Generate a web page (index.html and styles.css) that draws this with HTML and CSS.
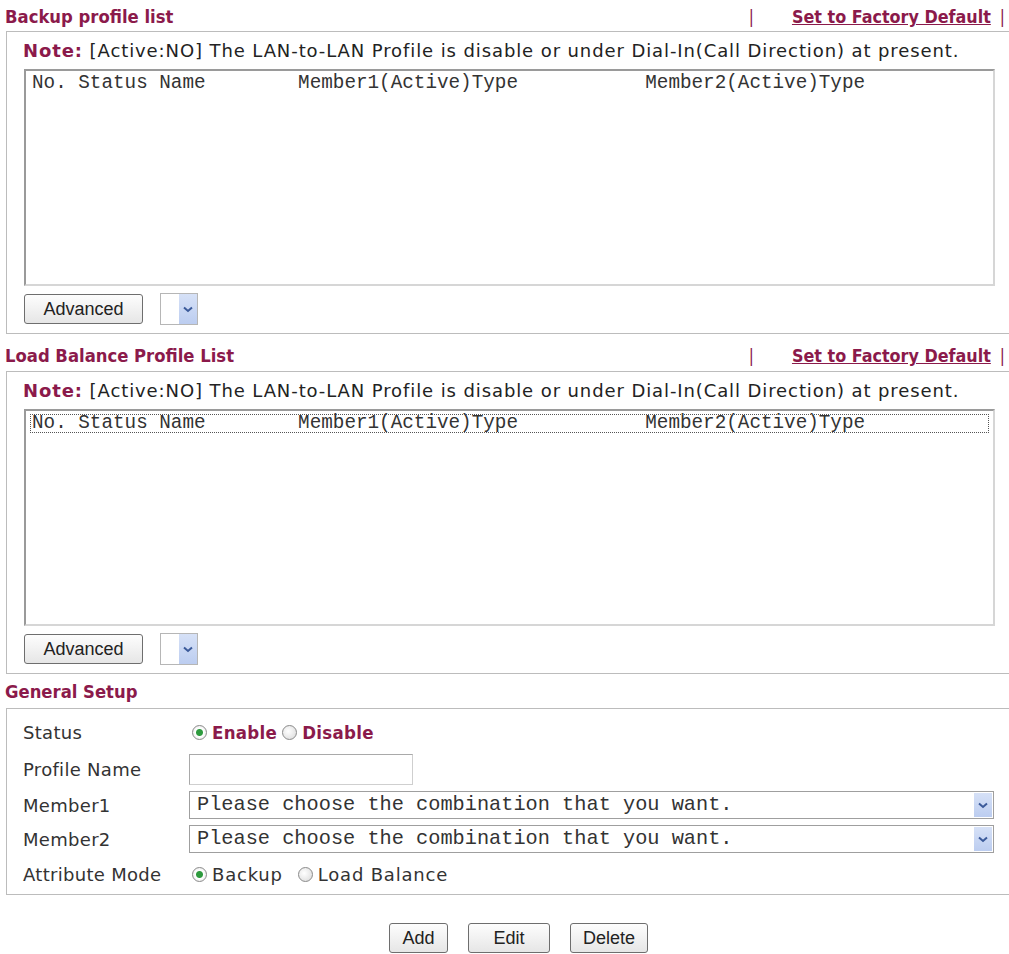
FILE: index.html
```html
<!DOCTYPE html>
<html lang="en">
<head>
  <meta charset="UTF-8">
  <title>Load-Balance/Backup Profile</title>
  <link rel="stylesheet" href="styles.css">
</head>
<body>

  <!-- Backup profile list -->
  <div class="section-head">
    <span class="title">Backup profile list</span>
    <span class="head-links"><span class="pipe">|</span><a href="#">Set to Factory Default</a><span class="pipe end">|</span></span>
  </div>
  <div class="box">
    <div class="note"><b>Note:</b> [Active:NO] The LAN-to-LAN Profile is disable or under Dial-In(Call Direction) at present.</div>
    <div class="listbox">
      <div class="list-row">No. Status Name        Member1(Active)Type           Member2(Active)Type</div>
    </div>
    <div class="list-actions">
      <button class="btn btn-adv">Advanced</button>
      <div class="mini-select"><span class="arrow"><svg width="10" height="7" viewBox="0 0 10 7"><path d="M1 1.5 L5 5 L9 1.5" fill="none" stroke="#3b5a9a" stroke-width="2"/></svg></span></div>
    </div>
  </div>

  <!-- Load Balance Profile List -->
  <div class="section-head second">
    <span class="title">Load Balance Profile List</span>
    <span class="head-links"><span class="pipe">|</span><a href="#">Set to Factory Default</a><span class="pipe end">|</span></span>
  </div>
  <div class="box">
    <div class="note"><b>Note:</b> [Active:NO] The LAN-to-LAN Profile is disable or under Dial-In(Call Direction) at present.</div>
    <div class="listbox">
      <div class="list-row focused">No. Status Name        Member1(Active)Type           Member2(Active)Type</div>
    </div>
    <div class="list-actions">
      <button class="btn btn-adv">Advanced</button>
      <div class="mini-select"><span class="arrow"><svg width="10" height="7" viewBox="0 0 10 7"><path d="M1 1.5 L5 5 L9 1.5" fill="none" stroke="#3b5a9a" stroke-width="2"/></svg></span></div>
    </div>
  </div>

  <!-- General Setup -->
  <div class="section-head third">
    <span class="title">General Setup</span>
  </div>
  <div class="box setup">
    <div class="setup-row row-status">
      <span class="label">Status</span>
      <span class="control">
        <span class="radio checked"></span><span class="opt-bold">Enable</span>
        <span class="radio"></span><span class="opt-bold">Disable</span>
      </span>
    </div>
    <div class="setup-row row-name">
      <span class="label">Profile Name</span>
      <span class="control"><input type="text" class="text-input"></span>
    </div>
    <div class="setup-row row-member">
      <span class="label">Member1</span>
      <span class="control">
        <div class="select"><span class="select-text">Please choose the combination that you want.</span><span class="arrow"><svg width="10" height="7" viewBox="0 0 10 7"><path d="M1 1.5 L5 5 L9 1.5" fill="none" stroke="#3b5a9a" stroke-width="2"/></svg></span></div>
      </span>
    </div>
    <div class="setup-row row-member">
      <span class="label">Member2</span>
      <span class="control">
        <div class="select"><span class="select-text">Please choose the combination that you want.</span><span class="arrow"><svg width="10" height="7" viewBox="0 0 10 7"><path d="M1 1.5 L5 5 L9 1.5" fill="none" stroke="#3b5a9a" stroke-width="2"/></svg></span></div>
      </span>
    </div>
    <div class="setup-row row-mode">
      <span class="label">Attribute Mode</span>
      <span class="control">
        <span class="radio checked"></span><span class="opt">Backup</span>
        <span class="radio"></span><span class="opt">Load Balance</span>
      </span>
    </div>
  </div>

  <div class="form-actions">
    <button class="btn btn-add">Add</button>
    <button class="btn btn-edit">Edit</button>
    <button class="btn btn-delete">Delete</button>
  </div>

</body>
</html>
```

FILE: styles.css
```css
* {
  margin: 0;
  padding: 0;
  box-sizing: border-box;
}
body {
  background: #fff;
  font-family: 'DejaVu Sans', Verdana, sans-serif;
  font-size: 18px;
  color: #222;
  padding-left: 6px;
  width: 1009px;
}

/* Section titles */
.section-head {
  height: 31px;
  display: flex;
  align-items: flex-end;
  justify-content: space-between;
  padding-bottom: 4px;
  color: #8b1a4b;
}
.section-head.second {
  height: 37px;
  padding-bottom: 5px;
}
.section-head.third {
  height: 34px;
  padding-bottom: 6px;
}
.section-head .title {
  font-family: 'DejaVu Sans Condensed', 'Liberation Sans', sans-serif;
  font-weight: bold;
  font-size: 18.3px;
  margin-left: -1px;
}
.head-links {
  font-family: 'DejaVu Sans Condensed', 'Liberation Sans', sans-serif;
  font-size: 17px;
  display: flex;
  align-items: baseline;
  padding-right: 4px;
}
.head-links .pipe {
  color: #8b1a4b;
  margin-right: 38px;
}
.head-links .pipe.end {
  margin-right: 0;
  margin-left: 9px;
}
.head-links a {
  color: #8b1a4b;
  font-weight: bold;
  font-size: 17.8px;
  text-decoration: underline;
}

/* Boxes */
.box {
  border: 1px solid #bcbcbc;
  border-right: none;
  padding: 0 0 8px 16px;
}
.note {
  height: 37px;
  line-height: 38px;
  font-size: 18px;
  letter-spacing: 0.9px;
  color: #222;
  white-space: nowrap;
}
.note b {
  color: #8b1a4b;
}
.listbox {
  width: 971px;
  height: 217px;
  margin-left: 1px;
  border: 2px solid #9a9a9a;
  border-right-color: #d6d6d6;
  border-bottom-color: #d6d6d6;
  padding: 3px 4px;
}
.list-row {
  font-family: 'Liberation Mono', 'Courier New', monospace;
  font-size: 19.3px;
  line-height: 19px;
  white-space: pre;
  color: #333;
  padding-left: 2px;
}
.list-row.focused {
  outline: 1px dotted #555;
  outline-offset: -1px;
}
.list-actions {
  display: flex;
  align-items: center;
  gap: 17px;
  margin-top: 7px;
  height: 32px;
}

/* Buttons */
.btn {
  font-family: 'Liberation Sans', Arial, sans-serif;
  font-size: 18px;
  color: #222;
  background: linear-gradient(#fdfdfd, #e6e6e6);
  border: 1px solid #6e6e6e;
  border-radius: 3px;
  height: 30px;
  cursor: pointer;
}
.btn-adv {
  width: 119px;
  margin-left: 1px;
}
.mini-select {
  width: 38px;
  height: 32px;
  border: 1px solid #b6b6b6;
  display: flex;
  justify-content: flex-end;
  background: #fff;
}
.arrow {
  width: 18px;
  background: linear-gradient(#d6e1f7, #bccdf0);
  display: flex;
  align-items: center;
  justify-content: center;
}

/* General setup */
.setup {
  padding: 5px 0 2px 16px;
}
.setup-row {
  display: flex;
  align-items: center;
}
.row-status { height: 36px; }
.row-name { height: 38px; }
.row-member { height: 34px; }
.row-mode { height: 36px; }
.setup-row .label {
  width: 166px;
  color: #333;
  letter-spacing: 0.3px;
}
.control {
  display: flex;
  align-items: center;
}
.radio {
  width: 15px;
  height: 15px;
  border-radius: 50%;
  border: 1px solid #8a8a8a;
  background: radial-gradient(circle at 40% 40%, #fff, #d8d8d8);
  margin: 0 5px 0 3px;
}
.radio.checked {
  background: radial-gradient(circle, #2e9a3e 0 3px, #fff 4px, #e2e2e2);
}
.opt-bold {
  font-family: 'DejaVu Sans Condensed', 'Liberation Sans', sans-serif;
  font-weight: bold;
  font-size: 18.5px;
  letter-spacing: 0.3px;
  color: #8b1a4b;
  margin-right: 2px;
}
.opt {
  color: #333;
  letter-spacing: 0.8px;
  margin-right: 12px;
}
.text-input {
  width: 224px;
  height: 31px;
  border: 1px solid #a9a9a9;
  border-bottom-color: #cfcfcf;
  border-right-color: #cfcfcf;
}
.select {
  width: 805px;
  height: 28px;
  border: 1px solid #9f9f9f;
  display: flex;
  justify-content: space-between;
  background: #fff;
}
.select-text {
  font-family: 'Liberation Mono', 'Courier New', monospace;
  font-size: 20.3px;
  line-height: 26px;
  padding-left: 7px;
  color: #333;
  white-space: pre;
}
.select .arrow {
  width: 18px;
  margin: 1px;
}

/* Bottom buttons */
.form-actions {
  display: flex;
  padding-left: 383px;
  gap: 20px;
  margin-top: 28px;
}
.btn-add { width: 59px; }
.btn-edit { width: 82px; }
.btn-delete { width: 78px; }
```
